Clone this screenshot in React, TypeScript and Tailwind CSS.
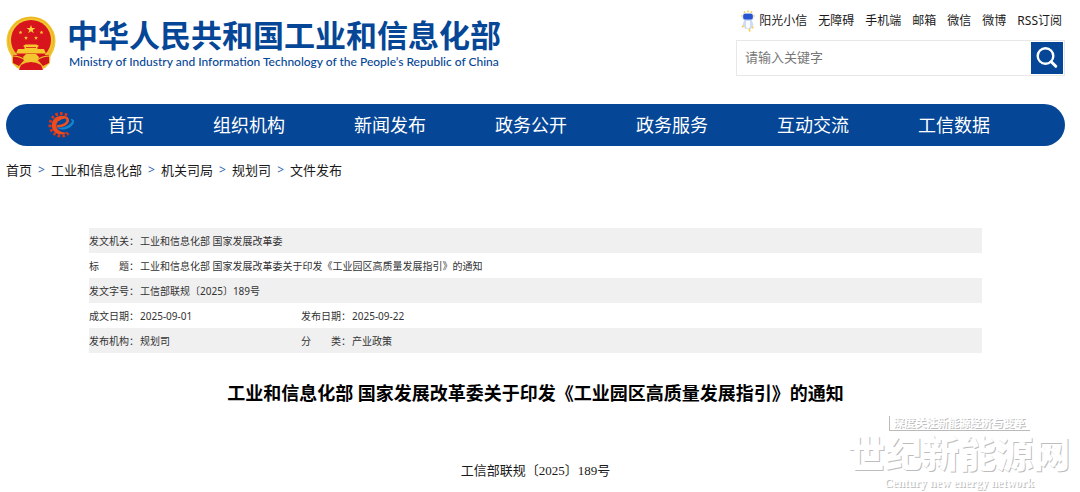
const navItems = [
  "首页",
  "组织机构",
  "新闻发布",
  "政务公开",
  "政务服务",
  "互动交流",
  "工信数据",
];

const topLinks = ["无障碍", "手机端", "邮箱", "微信", "微博", "RSS订阅"];

const crumbs = ["首页", "工业和信息化部", "机关司局", "规划司", "文件发布"];

const documentRows = [
  [["发文机关：", "工业和信息化部 国家发展改革委"]],
  [
    [
      "标　　题：",
      "工业和信息化部 国家发展改革委关于印发《工业园区高质量发展指引》的通知",
    ],
  ],
  [["发文字号：", "工信部联规〔2025〕189号"]],
  [
    ["成文日期：", "2025-09-01"],
    ["发布日期：", "2025-09-22"],
  ],
  [
    ["发布机构：", "规划司"],
    ["分　　类：", "产业政策"],
  ],
];

function Star({ x, y, r }: { x: number; y: number; r: number }) {
  return (
    <path
      transform={`translate(${x} ${y}) scale(${r})`}
      d="M0 -1 L.24 -.32 L.95 -.31 L.38 .12 L.59 .81 L0 .4 L-.59 .81 L-.38 .12 L-.95 -.31 L-.24 -.32Z"
      fill="#fbd23c"
    />
  );
}

function Emblem() {
  return (
    <svg viewBox="0 0 50 55" className="h-[55px] w-[50px] shrink-0" aria-hidden="true">
      <circle cx="25" cy="25" r="24.5" fill="#f3c62f" />
      <path d="M5 34 L6 47 L11 52 L17 54 H33 L39 52 L44 47 L45 34Z" fill="#efbd2b" />
      <circle cx="25" cy="24" r="20" fill="#d8141c" />
      <circle cx="25" cy="24" r="22.5" fill="none" stroke="#e3ac22" strokeWidth=".8" />
      <Star x={25} y={13.5} r={4.6} />
      <Star x={14.5} y={16.5} r={2.1} />
      <Star x={35.5} y={16.5} r={2.1} />
      <Star x={20} y={22} r={2.1} />
      <Star x={30} y={22} r={2.1} />
      <path
        d="M17 30 L19.5 28.5 H30.5 L33 30 L31.5 31 V33 H38 L40 37.5 H10 L12 33 H18.5 V31Z"
        fill="#f6c92f"
      />
      <path d="M20 31.5 H30" stroke="#d8141c" strokeWidth=".8" />
      <path d="M7 39 H17 L19 43 L13 50 L7 47Z" fill="#cf151b" />
      <path d="M43 39 H33 L31 43 L37 50 L43 47Z" fill="#cf151b" />
      <path d="M17 41 L20 38 H30 L33 41 L30 47 H20Z" fill="#f3c62f" />
      <path d="M15 49 Q25 43 35 49 L37 54 H13Z" fill="#d8141c" />
      <path d="M6 40 Q14 40 19 44 M44 40 Q36 40 31 44" fill="none" stroke="#f3c62f" strokeWidth="1.2" />
    </svg>
  );
}

function GearLogo() {
  return (
    <svg viewBox="0 0 28 28" className="h-7 w-7 shrink-0" fill="none" aria-hidden="true">
      <path
        d="M19 4.2 A11.2 11.2 0 1 0 20.5 22.2"
        stroke="#df3517"
        strokeWidth="3"
        strokeDasharray="2.6 2.1"
      />
      <path
        d="M18.5 6 C12 2.4 3.8 6.5 3.8 14.2 C3.8 22 12 25.8 20 21.5 C14.8 22 9 20 8.5 15.5 C8 11 12 7 17 7Z"
        fill="#ef4b1c"
      />
      <path
        d="M9 15.2 C15 15.5 20.5 12.2 19.7 8.6 C18.8 5.2 13 6 10 9.5"
        stroke="#f0501d"
        strokeWidth="2.4"
      />
      <path
        d="M10 17 C15 20.2 24.5 16.5 25.6 11.2 C26 9.3 25 8.4 23 8.2 C25.2 9.8 24.2 12 21 14.2 C17.5 16.7 13 17.4 10 17Z"
        fill="#1687cf"
        stroke="#1687cf"
        strokeWidth=".8"
      />
    </svg>
  );
}

function RobotIcon() {
  return (
    <svg viewBox="0 0 14 22" className="h-[22px] w-[14px]" aria-hidden="true">
      <path d="M3.5 9 H10.5 L12.5 15 L10 19 H4.5 L1.5 15Z" fill="#cfdcf0" />
      <path d="M5 11 H9 V17 L7 19 L5 17Z" fill="#f8fbff" />
      <rect x="1.5" y="3" width="11" height="7.6" rx="3" fill="#c9d8f5" />
      <rect x="2.2" y="3.8" width="9.6" height="5.6" rx="2" fill="#2853d3" />
      <path
        d="M3 1.6 L4 2.8 M7 .5 V2.2 M11 1.6 L10 2.8 M.2 6 H1.3 M12.7 6 H13.8 M1 17 L2.5 16 M8 19 L9 21.5 M12.4 18 L11 17"
        stroke="#ffc83d"
        strokeWidth="1.6"
      />
    </svg>
  );
}

function SiteHeader() {
  return (
    <header>
      <div className="flex items-start justify-between">
        <a href="#" className="flex gap-[11px] pt-4 text-[#054696]">
          <Emblem />
          <span>
            <span className="block text-[31px] font-bold leading-[38px]">
              中华人民共和国工业和信息化部
            </span>
            <span className="block pl-0.5 font-['Lato','Noto_Sans',sans-serif] text-[12px] font-medium leading-4">
              Ministry of Industry and Information Technology of the People’s Republic of China
            </span>
          </span>
        </a>

        <div className="w-[329px] pt-[10px]">
          <div className="flex items-center justify-end gap-[11px] whitespace-nowrap pr-[3px] text-[12px] leading-[22px]">
            <a href="#" className="flex items-center gap-1">
              <RobotIcon />
              阳光小信
            </a>
            {topLinks.map((link) => (
              <a key={link} href="#">
                {link}
              </a>
            ))}
          </div>
          <form className="mt-2 flex h-9 border border-[#e8e8e8] p-px">
            <input
              type="text"
              aria-label="请输入关键字"
              placeholder="请输入关键字"
              className="min-w-0 flex-1 px-[7px] text-[13px] outline-none placeholder:text-[#777]"
            />
            <button
              type="button"
              aria-label="搜索"
              className="flex w-8 items-center justify-center bg-[#054696]"
            >
              <svg viewBox="0 0 24 24" className="h-6 w-6" fill="none" stroke="white">
                <circle cx="10.5" cy="10" r="7.8" strokeWidth="2.4" />
                <path d="M16.2 15.8 L20.8 20.3" strokeWidth="3" strokeLinecap="round" />
              </svg>
            </button>
          </form>
        </div>
      </div>

      <nav className="mt-7 flex h-[42px] items-center rounded-full bg-[#054696] pl-[42px] text-white">
        <GearLogo />
        <ul className="flex gap-[69px] whitespace-nowrap pl-8 text-[18px] leading-6">
          {navItems.map((item) => (
            <li key={item}>
              <a href="#">{item}</a>
            </li>
          ))}
        </ul>
      </nav>
    </header>
  );
}

function Breadcrumb() {
  return (
    <nav aria-label="面包屑" className="mt-[14px]">
      <ol className="flex text-[13px] leading-5">
        {crumbs.map((crumb, index) => (
          <li key={crumb} className="flex">
            {index > 0 && <span className="w-[19px] text-center text-[12px] text-[#2a66ad]">&gt;</span>}
            <a href="#">{crumb}</a>
          </li>
        ))}
      </ol>
    </nav>
  );
}

function DocumentTable() {
  return (
    <table className="w-full table-fixed text-left text-[10px] leading-4 text-[#333]">
      <colgroup>
        <col className="w-[51px]" />
        <col className="w-[161px]" />
        <col className="w-[51px]" />
        <col />
      </colgroup>
      <tbody>
        {documentRows.map((row) => (
          <tr key={row[0][0]} className="h-[25px] odd:bg-[#f0f0f0]">
            {row.map(([label, value]) => [
              <th key={label} scope="row" className="whitespace-nowrap p-0 font-normal">
                {label}
              </th>,
              <td key={value} colSpan={row.length === 1 ? 3 : 1} className="p-0">
                {value}
              </td>,
            ])}
          </tr>
        ))}
      </tbody>
    </table>
  );
}

function Watermark() {
  return (
    <div className="pointer-events-none absolute bottom-0 right-[10px] flex flex-col items-center whitespace-nowrap pb-[3px] text-white [text-shadow:1px_1px_0_#bdbdbd]">
      <p className="border-b border-l border-[#bbb] px-1 text-[11px] font-bold leading-[14px]">
        深度关注新能源经济与变革
      </p>
      <p className="text-[37px] font-black leading-[46px]">世纪新能源网</p>
      <p className="font-['Liberation_Serif',serif] text-[12px] font-bold leading-3">
        Century new energy network
      </p>
    </div>
  );
}

export default function App() {
  return (
    <div className="relative bg-white pb-[11px] pl-[6px] pr-[15px] font-['Noto_Sans','Noto_Sans_CJK_SC',sans-serif] text-[#1a1a1a]">
      <SiteHeader />
      <Breadcrumb />
      <main className="mt-12 pl-[83px] pr-[83px]">
        <DocumentTable />
        <h1 className="mt-[26px] text-center text-[18px] font-bold leading-7 text-black">
          工业和信息化部 国家发展改革委关于印发《工业园区高质量发展指引》的通知
        </h1>
        <p className="mt-[54px] text-center font-['Liberation_Serif','Noto_Sans_CJK_SC',serif] text-[13px] leading-5">
          工信部联规〔2025〕189号
        </p>
      </main>
      <Watermark />
    </div>
  );
}
